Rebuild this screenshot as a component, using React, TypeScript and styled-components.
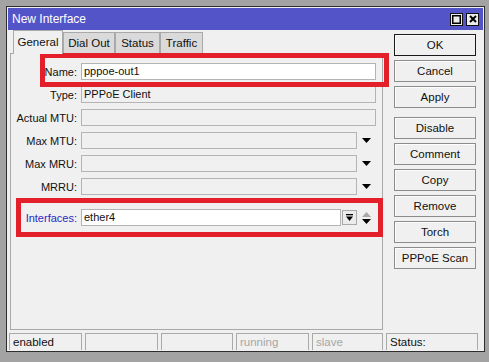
import styled, { createGlobalStyle } from 'styled-components'

const GlobalStyle = createGlobalStyle`
	html, body {
		margin: 0;
		background: #a3a3a3;
		font-family: 'Liberation Sans', Arial, sans-serif;
		font-size: 11px;
		color: #111;
	}
`
const SPage = styled.div`
	position: relative;
	width: 489px;
	height: 362px;
	padding: 6px 0 0 6px;
	box-sizing: border-box;
`
const SWindow = styled.div`
	width: 479px;
	height: 346px;
	box-sizing: border-box;
	border: 1px solid #2e2e2e;
	padding: 1px;
	background: #f0f0f0;
	display: flex;
	flex-direction: column;
`
const STitleBar = styled.div`
	height: 22px;
	background: #5454c9;
	color: #fff;
	display: flex;
	align-items: center;
	justify-content: space-between;
	padding: 0 4px 0 4px;
	font-size: 12px;
`
const STitleButtons = styled.div`
	display: flex;
	gap: 3px;
`
const STitleButton = styled.div`
	width: 13px;
	height: 13px;
	box-sizing: border-box;
	border: 1px solid #111;
	background: #ececec;
	display: flex;
	align-items: center;
	justify-content: center;
`
const SBody = styled.div`
	height: 300px;
	display: flex;
	padding-left: 2px;
`
const SLeft = styled.div`
	width: 373px;
	display: flex;
	flex-direction: column;
`
const STabs = styled.div`
	height: 23px;
	display: flex;
	align-items: flex-end;
	padding-left: 3px;
`
const STab = styled.div<{ $active?: boolean; $w: number }>`
	width: ${(p) => p.$w}px;
	height: ${(p) => (p.$active ? 24 : 21)}px;
	box-sizing: border-box;
	border: 1px solid #a9a9a9;
	border-bottom: none;
	background: ${(p) => (p.$active ? '#f0f0f0' : '#dadada')};
	margin-bottom: ${(p) => (p.$active ? -1 : 0)}px;
	position: relative;
	z-index: ${(p) => (p.$active ? 1 : 0)};
	display: flex;
	align-items: center;
	justify-content: center;
	font-size: 11.5px;
	padding-bottom: 1px;
`
const SPanel = styled.div`
	flex: 1;
	border: 1px solid #a9a9a9;
	padding: 9px 6px 0 0;
	display: flex;
	flex-direction: column;
	gap: 6px;
`
const SRow = styled.div<{ $spaced?: boolean }>`
	display: flex;
	align-items: center;
	height: 17px;
	gap: 4px;
	margin-top: ${(p) => (p.$spaced ? 8 : 0)}px;
`
const SLabel = styled.div<{ $link?: boolean }>`
	width: 66px;
	text-align: right;
	white-space: nowrap;
	color: ${(p) => (p.$link ? '#2a2ac4' : '#111')};
`
const SField = styled.div<{ $editable?: boolean }>`
	flex: 1;
	height: 17px;
	box-sizing: border-box;
	border: 1px solid #b4b4b4;
	background: ${(p) => (p.$editable ? '#fff' : '#f0f0f0')};
	padding: 0 2px;
	line-height: 15px;
	white-space: nowrap;
`
const SArrowCell = styled.div`
	width: 19px;
	height: 17px;
	display: flex;
	align-items: center;
	justify-content: center;
	margin-left: -4px;
`
const SSmallButton = styled.div`
	width: 15px;
	height: 15px;
	box-sizing: border-box;
	border: 1px solid #a9a9a9;
	background: #ececec;
	display: flex;
	align-items: center;
	justify-content: center;
	margin-left: -3px;
`
const SButtons = styled.div`
	width: 82px;
	margin-left: 11px;
	padding-top: 4px;
	display: flex;
	flex-direction: column;
	gap: 4px;
`
const SButton = styled.div<{ $default?: boolean; $spaced?: boolean }>`
	height: 22px;
	box-sizing: border-box;
	border: 1px solid ${(p) => (p.$default ? '#1a1a1a' : '#8c8c8c')};
	box-shadow: inset 1px 1px 0 #fdfdfd;
	background: #f0f0f0;
	display: flex;
	align-items: center;
	justify-content: center;
	font-size: 11.5px;
	margin-top: ${(p) => (p.$spaced ? 5 : 0)}px;
`
const SStatusBar = styled.div`
	margin-top: 3px;
	padding-left: 1px;
	flex: 1;
	display: grid;
	grid-template-columns: 73px 73px 72px 73px 71px 92px;
	column-gap: 3px;
`
const SStatusCell = styled.div<{ $dim?: boolean }>`
	box-sizing: border-box;
	border: 1px solid #a9a9a9;
	border-bottom: none;
	padding: 2px 3px 0;
	color: ${(p) => (p.$dim ? '#a6a6a6' : '#111')};
	white-space: nowrap;
	overflow: hidden;
	font-size: 11.5px;
`
const SHighlight = styled.div<{ $x: number; $y: number; $w: number; $h: number }>`
	position: absolute;
	left: ${(p) => p.$x}px;
	top: ${(p) => p.$y}px;
	width: ${(p) => p.$w}px;
	height: ${(p) => p.$h}px;
	box-sizing: border-box;
	border: 5px solid #e3202a;
	pointer-events: none;
`

function DownArrow() {
	return (
		<svg width="9" height="5" viewBox="0 0 9 5">
			<polygon points="0,0 9,0 4.5,5" fill="#000" />
		</svg>
	)
}

function UpDown() {
	return (
		<svg width="9" height="12" viewBox="0 0 9 12">
			<polygon points="4.5,0 9,5 0,5" fill="#a8a8a8" />
			<polygon points="0,7 9,7 4.5,12" fill="#000" />
		</svg>
	)
}

function ExpandIcon() {
	return (
		<svg width="7" height="7" viewBox="0 0 7 7">
			<rect x="0" y="0" width="7" height="1.3" fill="#000" />
			<polygon points="0,2.5 7,2.5 3.5,7" fill="#000" />
		</svg>
	)
}

const fields = [
	{ label: 'Type:', value: 'PPPoE Client' },
	{ label: 'Actual MTU:', value: '' },
]
const dropFields = ['Max MTU:', 'Max MRU:', 'MRRU:']
const buttons = ['Disable', 'Comment', 'Copy', 'Remove', 'Torch', 'PPPoE Scan']

export default function App() {
	return (
		<SPage>
			<GlobalStyle />
			<SWindow>
				<STitleBar>
					<span>New Interface</span>
					<STitleButtons>
						<STitleButton>
							<svg width="9" height="9" viewBox="0 0 9 9">
								<rect x="0.75" y="0.75" width="7.5" height="7.5" fill="none" stroke="#000" strokeWidth="1.5" />
							</svg>
						</STitleButton>
						<STitleButton>
							<svg width="8" height="8" viewBox="0 0 8 8">
								<path d="M1 1 L7 7 M7 1 L1 7" stroke="#000" strokeWidth="2" />
							</svg>
						</STitleButton>
					</STitleButtons>
				</STitleBar>
				<SBody>
					<SLeft>
						<STabs>
							<STab $active $w={50}>General</STab>
							<STab $w={52}>Dial Out</STab>
							<STab $w={45}>Status</STab>
							<STab $w={43}>Traffic</STab>
						</STabs>
						<SPanel>
							<SRow>
								<SLabel>Name:</SLabel>
								<SField $editable>pppoe-out1</SField>
							</SRow>
							{fields.map((f) => (
								<SRow key={f.label}>
									<SLabel>{f.label}</SLabel>
									<SField>{f.value}</SField>
								</SRow>
							))}
							{dropFields.map((label) => (
								<SRow key={label}>
									<SLabel>{label}</SLabel>
									<SField />
									<SArrowCell>
										<DownArrow />
									</SArrowCell>
								</SRow>
							))}
							<SRow $spaced>
								<SLabel $link>Interfaces:</SLabel>
								<SField $editable>ether4</SField>
								<SSmallButton>
									<ExpandIcon />
								</SSmallButton>
								<SArrowCell>
									<UpDown />
								</SArrowCell>
							</SRow>
						</SPanel>
					</SLeft>
					<SButtons>
						<SButton $default>OK</SButton>
						<SButton>Cancel</SButton>
						<SButton>Apply</SButton>
						{buttons.map((b, i) => (
							<SButton key={b} $spaced={i === 0}>
								{b}
							</SButton>
						))}
					</SButtons>
				</SBody>
				<SStatusBar>
					<SStatusCell>enabled</SStatusCell>
					<SStatusCell />
					<SStatusCell />
					<SStatusCell $dim>running</SStatusCell>
					<SStatusCell $dim>slave</SStatusCell>
					<SStatusCell>Status:</SStatusCell>
				</SStatusBar>
			</SWindow>
			<SHighlight $x={40} $y={53} $w={349} $h={34} />
			<SHighlight $x={16} $y={198} $w={367} $h={39} />
		</SPage>
	)
}
